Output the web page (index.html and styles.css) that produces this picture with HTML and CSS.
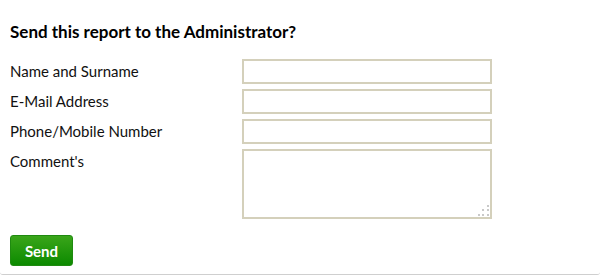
FILE: index.html
```html
<html>
<head>
<link rel="stylesheet" href="styles.css">
</head>
<body>
<div class="box">
  <h3 class="title">Send this report to the Administrator?</h3>
  <div class="row">
    <label class="lbl" for="name">Name and Surname</label>
    <input type="text" class="fld" id="name">
  </div>
  <div class="row">
    <label class="lbl" for="email">E-Mail Address</label>
    <input type="text" class="fld" id="email">
  </div>
  <div class="row">
    <label class="lbl" for="phone">Phone/Mobile Number</label>
    <input type="text" class="fld" id="phone">
  </div>
  <div class="row">
    <label class="lbl" for="comment">Comment's</label>
    <textarea class="fld area" id="comment"></textarea>
  </div>
  <button class="send">Send</button>
</div>
</body>
</html>
```
FILE: styles.css
```css
body
{
margin:0;
background:white;
font-family:Lato, "Liberation Sans", sans-serif;
color:#111;
}
.box
{
width:600px;
height:275px;
box-sizing:border-box;
padding:21px 10px 0 10px;
border-bottom:1px solid #cfcfcf;
border-radius:0 0 3px 3px;
}
.title
{
margin:0 0 17px 0;
font-size:17px;
font-weight:bold;
line-height:21px;
color:#000;
}
.row
{
display:flex;
margin-bottom:5px;
}
.lbl
{
width:232px;
font-size:15px;
line-height:25px;
}
.fld
{
width:250px;
height:25px;
box-sizing:border-box;
border:2px solid #d4d0bb;
background:white;
margin:0;
padding:2px 4px;
font-family:inherit;
}
/* grip dots drawn as tiny squares, the native handle is hidden */
.area
{
height:70px;
resize:none;
background:
  linear-gradient(#c9c9c9,#c9c9c9) right 1px bottom 10px / 2px 2px no-repeat,
  linear-gradient(#c9c9c9,#c9c9c9) right 1px bottom 6px / 2px 2px no-repeat,
  linear-gradient(#c9c9c9,#c9c9c9) right 6px bottom 6px / 2px 2px no-repeat,
  linear-gradient(#c9c9c9,#c9c9c9) right 1px bottom 1px / 2px 2px no-repeat,
  linear-gradient(#c9c9c9,#c9c9c9) right 6px bottom 1px / 2px 2px no-repeat,
  linear-gradient(#c9c9c9,#c9c9c9) right 10px bottom 1px / 2px 2px no-repeat,
  white;
}
.send
{
margin-top:11px;
width:63px;
height:31px;
border:1px solid #1f8a10;
border-radius:3px;
background:linear-gradient(#3aa51a, #0c8a00);
color:white;
font-family:inherit;
font-size:15px;
font-weight:bold;
}
```
